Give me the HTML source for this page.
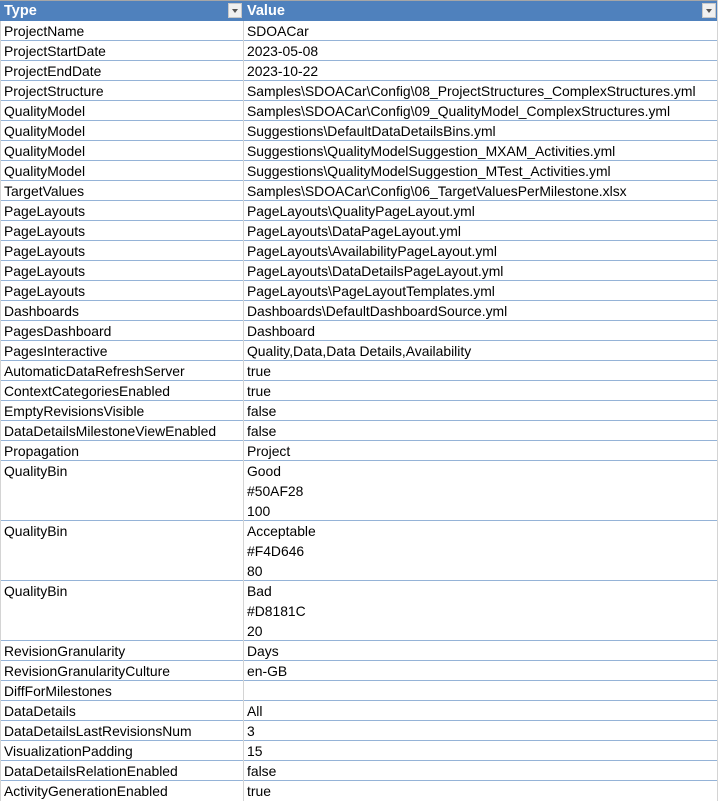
<!DOCTYPE html>
<html><head><meta charset="utf-8"><style>
body{margin:0;width:718px;height:801px;overflow:hidden;background:#fff;font-family:"Liberation Sans",Arial,sans-serif;font-size:13.9px;color:#000}
.r{position:absolute;left:0;width:717px;border-bottom:1px solid #95b3d7;box-sizing:border-box}
.c1,.c2{position:absolute;top:0;line-height:20px;white-space:nowrap}
.c1{left:4px}.c2{left:247px}
.h{position:absolute;left:0;top:0;width:718px;height:21px;background:#4f81bd;border-top:1px solid #a6a6a6;box-sizing:border-box;color:#fff;font-weight:bold;font-size:14.5px}
.h span{position:absolute;top:1px;line-height:18px}
.dd{position:absolute;top:2px;width:14px;height:15px;background:#f0f0f0;border:1px solid #c8c8c8;box-sizing:border-box}
.dd:after{content:"";position:absolute;left:3px;top:5px;border-left:3px solid transparent;border-right:3px solid transparent;border-top:4px solid #555}
.vl{position:absolute;left:243px;top:21px;width:1px;height:780px;background:#d4d4d4}
.ll{position:absolute;left:0;top:21px;width:1px;height:780px;background:#d4d4d4}
.rl{position:absolute;left:717px;top:0;width:1px;height:801px;background:#d4d4d4}
</style></head><body>
<div class="h"><span style="left:4px">Type</span><div class="dd" style="left:228px"></div><span style="left:247px">Value</span><div class="dd" style="left:702px"></div></div>
<div class="r" style="top:21px;height:20px"><span class="c1">ProjectName</span><span class="c2">SDOACar</span></div>
<div class="r" style="top:41px;height:20px"><span class="c1">ProjectStartDate</span><span class="c2">2023-05-08</span></div>
<div class="r" style="top:61px;height:20px"><span class="c1">ProjectEndDate</span><span class="c2">2023-10-22</span></div>
<div class="r" style="top:81px;height:20px"><span class="c1">ProjectStructure</span><span class="c2">Samples\SDOACar\Config\08_ProjectStructures_ComplexStructures.yml</span></div>
<div class="r" style="top:101px;height:20px"><span class="c1">QualityModel</span><span class="c2">Samples\SDOACar\Config\09_QualityModel_ComplexStructures.yml</span></div>
<div class="r" style="top:121px;height:20px"><span class="c1">QualityModel</span><span class="c2">Suggestions\DefaultDataDetailsBins.yml</span></div>
<div class="r" style="top:141px;height:20px"><span class="c1">QualityModel</span><span class="c2">Suggestions\QualityModelSuggestion_MXAM_Activities.yml</span></div>
<div class="r" style="top:161px;height:20px"><span class="c1">QualityModel</span><span class="c2">Suggestions\QualityModelSuggestion_MTest_Activities.yml</span></div>
<div class="r" style="top:181px;height:20px"><span class="c1">TargetValues</span><span class="c2">Samples\SDOACar\Config\06_TargetValuesPerMilestone.xlsx</span></div>
<div class="r" style="top:201px;height:20px"><span class="c1">PageLayouts</span><span class="c2">PageLayouts\QualityPageLayout.yml</span></div>
<div class="r" style="top:221px;height:20px"><span class="c1">PageLayouts</span><span class="c2">PageLayouts\DataPageLayout.yml</span></div>
<div class="r" style="top:241px;height:20px"><span class="c1">PageLayouts</span><span class="c2">PageLayouts\AvailabilityPageLayout.yml</span></div>
<div class="r" style="top:261px;height:20px"><span class="c1">PageLayouts</span><span class="c2">PageLayouts\DataDetailsPageLayout.yml</span></div>
<div class="r" style="top:281px;height:20px"><span class="c1">PageLayouts</span><span class="c2">PageLayouts\PageLayoutTemplates.yml</span></div>
<div class="r" style="top:301px;height:20px"><span class="c1">Dashboards</span><span class="c2">Dashboards\DefaultDashboardSource.yml</span></div>
<div class="r" style="top:321px;height:20px"><span class="c1">PagesDashboard</span><span class="c2">Dashboard</span></div>
<div class="r" style="top:341px;height:20px"><span class="c1">PagesInteractive</span><span class="c2">Quality,Data,Data Details,Availability</span></div>
<div class="r" style="top:361px;height:20px"><span class="c1">AutomaticDataRefreshServer</span><span class="c2">true</span></div>
<div class="r" style="top:381px;height:20px"><span class="c1">ContextCategoriesEnabled</span><span class="c2">true</span></div>
<div class="r" style="top:401px;height:20px"><span class="c1">EmptyRevisionsVisible</span><span class="c2">false</span></div>
<div class="r" style="top:421px;height:20px"><span class="c1">DataDetailsMilestoneViewEnabled</span><span class="c2">false</span></div>
<div class="r" style="top:441px;height:20px"><span class="c1">Propagation</span><span class="c2">Project</span></div>
<div class="r" style="top:461px;height:60px"><span class="c1">QualityBin</span><span class="c2">Good<br>#50AF28<br>100</span></div>
<div class="r" style="top:521px;height:60px"><span class="c1">QualityBin</span><span class="c2">Acceptable<br>#F4D646<br>80</span></div>
<div class="r" style="top:581px;height:60px"><span class="c1">QualityBin</span><span class="c2">Bad<br>#D8181C<br>20</span></div>
<div class="r" style="top:641px;height:20px"><span class="c1">RevisionGranularity</span><span class="c2">Days</span></div>
<div class="r" style="top:661px;height:20px"><span class="c1">RevisionGranularityCulture</span><span class="c2">en-GB</span></div>
<div class="r" style="top:681px;height:20px"><span class="c1">DiffForMilestones</span><span class="c2"></span></div>
<div class="r" style="top:701px;height:20px"><span class="c1">DataDetails</span><span class="c2">All</span></div>
<div class="r" style="top:721px;height:20px"><span class="c1">DataDetailsLastRevisionsNum</span><span class="c2">3</span></div>
<div class="r" style="top:741px;height:20px"><span class="c1">VisualizationPadding</span><span class="c2">15</span></div>
<div class="r" style="top:761px;height:20px"><span class="c1">DataDetailsRelationEnabled</span><span class="c2">false</span></div>
<div class="r" style="top:781px;height:20px;border-bottom:none"><span class="c1">ActivityGenerationEnabled</span><span class="c2">true</span></div>
<div class="vl"></div><div class="ll"></div><div class="rl"></div>
</body></html>
